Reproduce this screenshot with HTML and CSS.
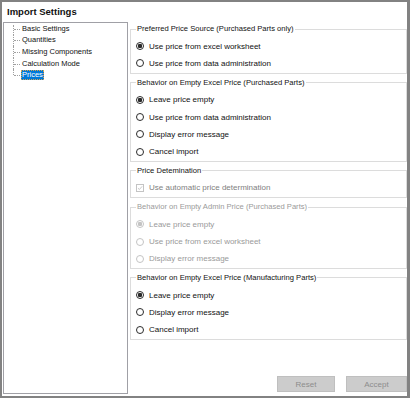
FILE: index.html
```html
<html>

<head>
    <title>Import Settings</title>
    <link rel="stylesheet" href="styles.css">
</head>

<body>
    <div class="window">
        <div class="title">Import Settings</div>
        <div class="main">
            <ul class="tree">
                <li class="node"><span class="node-text">Basic Settings</span></li>
                <li class="node"><span class="node-text">Quantities</span></li>
                <li class="node"><span class="node-text">Missing Components</span></li>
                <li class="node"><span class="node-text">Calculation Mode</span></li>
                <li class="node last"><span class="node-text selected">Prices</span></li>
            </ul>
            <div class="content">
                <fieldset class="group">
                    <legend>Preferred Price Source (Purchased Parts only)</legend>
                    <label class="opt"><input class="radio" type="radio" name="source" checked> Use price from excel worksheet</label>
                    <label class="opt"><input class="radio" type="radio" name="source"> Use price from data administration</label>
                </fieldset>
                <fieldset class="group">
                    <legend>Behavior on Empty Excel Price (Purchased Parts)</legend>
                    <label class="opt"><input class="radio" type="radio" name="empty" checked> Leave price empty</label>
                    <label class="opt"><input class="radio" type="radio" name="empty"> Use price from data administration</label>
                    <label class="opt"><input class="radio" type="radio" name="empty"> Display error message</label>
                    <label class="opt"><input class="radio" type="radio" name="empty"> Cancel import</label>
                </fieldset>
                <fieldset class="group">
                    <legend>Price Detemination</legend>
                    <label class="opt disabled">
                        <span class="check">
                            <svg width="8" height="8" viewBox="0 0 8 8"><polyline points="1.3,4.2 3.2,6 6.8,1.8" fill="none" stroke="#b5b5b5" stroke-width="1"/></svg>
                        </span>
                        Use automatic price determination
                    </label>
                </fieldset>
                <fieldset class="group disabled" disabled>
                    <legend>Behavior on Empty Admin Price (Purchased Parts)</legend>
                    <label class="opt"><input class="radio" type="radio" name="admin" checked> Leave price empty</label>
                    <label class="opt"><input class="radio" type="radio" name="admin"> Use price from excel worksheet</label>
                    <label class="opt"><input class="radio" type="radio" name="admin"> Display error message</label>
                </fieldset>
                <fieldset class="group">
                    <legend>Behavior on Empty Excel Price (Manufacturing Parts)</legend>
                    <label class="opt"><input class="radio" type="radio" name="manu" checked> Leave price empty</label>
                    <label class="opt"><input class="radio" type="radio" name="manu"> Display error message</label>
                    <label class="opt"><input class="radio" type="radio" name="manu"> Cancel import</label>
                </fieldset>
                <div class="footer">
                    <button class="btn btn-reset" disabled>Reset</button>
                    <button class="btn btn-accept" disabled>Accept</button>
                </div>
            </div>
        </div>
    </div>
</body>

</html>
```

FILE: styles.css
```css
body {
    font-family: "Liberation Sans", Arial, sans-serif;
    font-size: 8px;
    margin: 0;
    padding: 0;
    background-color: #ffffff;
    color: #111111;
}

.window {
    box-sizing: border-box;
    width: 410px;
    height: 398px;
    border: 2px solid #828282;
    border-right-width: 3px;
    display: flex;
    flex-direction: column;
    background-color: #ffffff;
}

.title {
    height: 20px;
    box-sizing: border-box;
    padding: 3px 0 0 5px;
    font-size: 9.5px;
    font-weight: bold;
    line-height: 13px;
}

.main {
    display: flex;
    height: 372px;
}

/* tree */

.tree {
    box-sizing: border-box;
    width: 125px;
    height: 372px;
    margin: 0 0 0 1px;
    padding: 0;
    list-style: none;
    border: 1px solid #a0a0a6;
    font-size: 7.5px;
}

.node {
    position: relative;
    height: 11.6px;
    display: flex;
    align-items: center;
    padding-left: 16.5px;
}

.node::before {
    content: "";
    position: absolute;
    left: 9px;
    top: 0;
    bottom: 0;
    border-left: 1px dotted #a0a0a0;
}

.node.last::before {
    bottom: 50%;
}

.node::after {
    content: "";
    position: absolute;
    left: 10px;
    width: 6px;
    top: 50%;
    border-top: 1px dotted #a0a0a0;
}

.node:first-child::before {
    top: 2px;
}

.node-text {
    line-height: 10px;
    padding: 0 1.5px;
}

.selected {
    background-color: #0078d7;
    color: #ffffff;
    outline: 1px dotted #d9a44c;
    outline-offset: -1px;
}

/* groups */

.content {
    width: 277px;
    margin-left: 2px;
    padding-top: 2px;
    padding-bottom: 2px;
    box-sizing: border-box;
    display: flex;
    flex-direction: column;
    gap: 4px;
}

.group {
    margin: 0;
    min-width: 0;
    padding: 3.5px 5px 0.5px 5px;
    border: 1px solid #dcdcdc;
}

.group legend {
    padding: 0 1px;
    line-height: 10px;
    font-size: 7.6px;
}

.group.disabled legend,
.group.disabled .opt {
    color: #9a9a9a;
}

.opt {
    display: flex;
    align-items: center;
    gap: 5px;
    height: 17.3px;
}

.opt.disabled {
    color: #808080;
}

.radio {
    appearance: none;
    box-sizing: border-box;
    width: 8px;
    height: 8px;
    margin: 0;
    border: 1px solid #2b2b2b;
    border-radius: 50%;
    background: #ffffff;
    flex: none;
}

.radio:checked {
    background: radial-gradient(circle, #2b2b2b 0 2px, #ffffff 2.5px);
}

.radio:disabled {
    border-color: #c4c4c4;
}

.radio:disabled:checked {
    background: radial-gradient(circle, #c4c4c4 0 2px, #ffffff 2.5px);
}

.check {
    box-sizing: border-box;
    width: 8px;
    height: 8px;
    border: 1px solid #c4c4c4;
    display: flex;
    align-items: center;
    justify-content: center;
    flex: none;
}

.check svg {
    display: block;
}

/* buttons */

.footer {
    margin-top: auto;
    display: flex;
    justify-content: flex-end;
    gap: 11px;
}

.btn {
    font-family: "Liberation Sans", Arial, sans-serif;
    font-size: 8px;
    color: #8c8c8c;
    background-color: #cccccc;
    border: 1px solid #bfbfbf;
    height: 16px;
    padding: 0;
}

.btn-reset {
    width: 58px;
}

.btn-accept {
    width: 61px;
}
```
